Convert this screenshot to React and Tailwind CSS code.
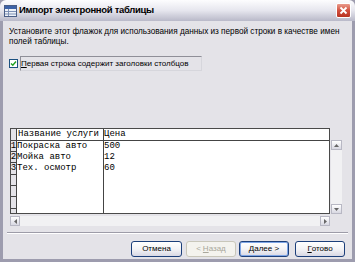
export default function App() {
  const rows = [
    { n: "1", a: "Покраска авто", b: "500", h: "h-[11px]" },
    { n: "2", a: "Мойка авто", b: "12", h: "h-[11px]" },
    { n: "3", a: "Тех. осмотр", b: "60", h: "h-[12px]" },
    { n: "", a: "", b: "", h: "h-[11px]" },
    { n: "", a: "", b: "", h: "h-[11px]" },
    { n: "", a: "", b: "", h: "h-[12px]" },
    { n: "", a: "", b: "", h: "h-[11px]" },
  ];
  const btn =
    "h-[16px] rounded-[3px] border border-[#1c3f7a] bg-gradient-to-b from-white via-[#f4f4f6] to-[#d8d8e4] text-[8px] text-black flex items-center justify-center";
  return (
    <div className="w-[355px] h-[262px] flex flex-col bg-[#9d9cae] font-['Liberation_Sans',sans-serif] overflow-hidden">
      {/* title bar */}
      <div className="h-[21px] flex items-center bg-gradient-to-b from-[#fdfdfe] via-[#e6e6ee] to-[#b9b9c9] rounded-t-[6px] px-[3px]">
        <svg width="13" height="12" viewBox="0 0 13 12" className="ml-[1px]">
          <rect x="0.5" y="0.5" width="12" height="11" fill="#eef2f8" stroke="#4a5e86" />
          <rect x="1" y="1" width="11" height="3" fill="#3d63a8" />
          <line x1="1" y1="6.5" x2="12" y2="6.5" stroke="#7d90b5" />
          <line x1="1" y1="9" x2="12" y2="9" stroke="#7d90b5" />
          <line x1="4.5" y1="4" x2="4.5" y2="11" stroke="#7d90b5" />
        </svg>
        <span className="ml-[2px] text-[9.5px] font-bold text-black tracking-[-0.3px]">Импорт электронной таблицы</span>
        <div className="ml-auto w-[15px] h-[15px] rounded-[2px] bg-gradient-to-b from-[#e89a8c] via-[#d2503f] to-[#b8321f] border border-white flex items-center justify-center mr-[1px]">
          <svg width="9" height="9" viewBox="0 0 9 9">
            <path d="M1.5 1.5 L7.5 7.5 M7.5 1.5 L1.5 7.5" stroke="white" strokeWidth="1.8" />
          </svg>
        </div>
      </div>
      {/* body */}
      <div className="flex-1 mx-[3px] mb-[3px] bg-[#e4e3e8] flex flex-col pl-[6px] pr-[4px]">
        <div className="mt-[6px] text-[8.2px] leading-[10px] text-black">
          Установите этот флажок для использования данных из первой строки в качестве имен
          <br />
          полей таблицы.
        </div>
        <div className="mt-[9px] flex items-center">
          <div className="w-[9px] h-[9px] border border-[#1c5180] bg-white flex items-center justify-center">
            <svg width="7" height="7" viewBox="0 0 7 7">
              <path d="M1 3.5 L2.8 5.3 L6 1.5" stroke="#21a121" strokeWidth="1.4" fill="none" />
            </svg>
          </div>
          <div className="ml-[2px] w-[182px] h-[15px] border border-[#8f8f98] border-r-[#d6d6dc] border-b-[#d6d6dc] flex items-center text-[8px] text-black">
            <span><span className="underline">П</span>ервая строка содержит заголовки столбцов</span>
          </div>
        </div>
        {/* grid */}
        <div className="mt-[57px] ml-[1px] flex">
          <div className="flex flex-col">
            <div className="w-[320px] h-[86px] border border-[#4a4a4a] bg-white flex flex-col overflow-hidden font-['Liberation_Mono',monospace] text-[9px] text-black">
              <div className="h-[12px] flex border-b border-[#444] shrink-0">
                <div className="w-[6px] bg-[#e4e3e8] border-r border-[#444]"></div>
                <div className="w-[87px] border-r border-[#444] pl-[1px] leading-[11px]">Название услуги</div>
                <div className="flex-1 leading-[11px]">Цена</div>
              </div>
              {rows.map((r, i) => (
                <div key={i} className={`${r.h} flex shrink-0`}>
                  <div className="w-[6px] bg-[#e4e3e8] border-r border-b border-[#444] leading-[10px] text-[9px] flex justify-center overflow-visible">{r.n}</div>
                  <div className="w-[87px] border-r border-[#444] leading-[11px]">{r.a}</div>
                  <div className="flex-1 leading-[11px]">{r.b}</div>
                </div>
              ))}
            </div>
            {/* horizontal scroll */}
            <div className="mt-[2px] w-[320px] h-[10px] bg-[#f1f1f3] flex justify-between">
              <div className="w-[10px] h-[10px] border border-[#b8b8c4] bg-gradient-to-b from-white to-[#d8d8e2] flex items-center justify-center">
                <svg width="3" height="5" viewBox="0 0 3 5"><path d="M3 0 L0 2.5 L3 5Z" fill="#666" /></svg>
              </div>
              <div className="w-[10px] h-[10px] border border-[#b8b8c4] bg-gradient-to-b from-white to-[#d8d8e2] flex items-center justify-center">
                <svg width="3" height="5" viewBox="0 0 3 5"><path d="M0 0 L3 2.5 L0 5Z" fill="#666" /></svg>
              </div>
            </div>
          </div>
          {/* vertical scroll */}
          <div className="ml-[1px] mt-[12px] w-[11px] h-[74px] bg-[#f1f1f3] flex flex-col justify-between">
            <div className="w-[11px] h-[10px] border border-[#b8b8c4] bg-gradient-to-b from-white to-[#d8d8e2] flex items-center justify-center">
              <svg width="5" height="3" viewBox="0 0 5 3"><path d="M0 3 L2.5 0 L5 3Z" fill="#666" /></svg>
            </div>
            <div className="w-[11px] h-[10px] border border-[#b8b8c4] bg-gradient-to-b from-white to-[#d8d8e2] flex items-center justify-center">
              <svg width="5" height="3" viewBox="0 0 5 3"><path d="M0 0 L2.5 3 L5 0Z" fill="#666" /></svg>
            </div>
          </div>
        </div>
        {/* separator */}
        <div className="mt-[6px] -ml-[2px] h-[2px] border-t border-[#9d9ca8] border-b border-b-white"></div>
        {/* buttons */}
        <div className="mt-[7px] flex">
          <div className={`ml-[122px] w-[51px] ${btn}`}>Отмена</div>
          <div className="ml-[4px] w-[50px] h-[16px] rounded-[3px] border border-[#c9c7ba] bg-[#f4f3ee] text-[8px] text-[#a9a79b] flex items-center justify-center">
            &lt; <span className="underline ml-[2px]">Н</span>азад
          </div>
          <div className={`ml-[3px] w-[50px] ${btn} shadow-[inset_0_0_0_1px_#7fa6e6]`}>
            <span className="underline">Д</span>алее &gt;
          </div>
          <div className={`ml-[6px] w-[50px] ${btn}`}>
            <span className="underline">Г</span>отово
          </div>
        </div>
      </div>
    </div>
  );
}
